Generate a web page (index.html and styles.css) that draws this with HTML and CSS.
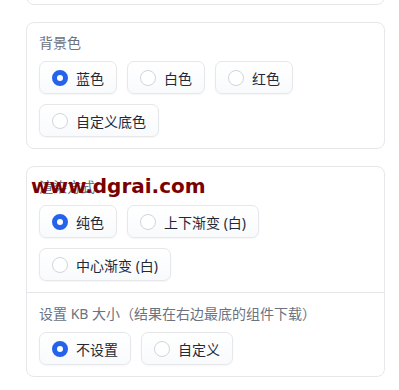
FILE: index.html
```html
<!DOCTYPE html>
<html lang="zh-CN">
<head>
    <meta charset="UTF-8">
    <meta name="viewport" content="width=device-width, initial-scale=1.0">
    <title>设置</title>
    <link rel="stylesheet" href="styles.css">
</head>
<body>

<div class="panel">
    <div class="card card-top"></div>

    <div class="card">
        <div class="section">
            <div class="label">背景色</div>
            <div class="options">
                <label class="option checked"><span class="radio"></span>蓝色</label>
                <label class="option"><span class="radio"></span>白色</label>
                <label class="option"><span class="radio"></span>红色</label>
                <label class="option"><span class="radio"></span>自定义底色</label>
            </div>
        </div>
    </div>

    <div class="card">
        <div class="section">
            <div class="label">渲染方式</div>
            <div class="options">
                <label class="option checked"><span class="radio"></span>纯色</label>
                <label class="option"><span class="radio"></span>上下渐变 (白)</label>
                <label class="option"><span class="radio"></span>中心渐变 (白)</label>
            </div>
        </div>
        <div class="section divided">
            <div class="label">设置 KB 大小（结果在右边最底的组件下载）</div>
            <div class="options">
                <label class="option checked"><span class="radio"></span>不设置</label>
                <label class="option"><span class="radio"></span>自定义</label>
            </div>
        </div>
    </div>

    <div class="watermark">www.dgrai.com</div>
</div>

</body>
</html>
```

FILE: styles.css
```css
body {
    margin: 0;
    background-color: #ffffff;
    font-family: "Noto Sans", "Noto Sans CJK SC", sans-serif;
    color: #1f2937;
}
.panel {
    position: relative;
    display: flex;
    flex-direction: column;
    gap: 17px;
    width: 359px;
    margin-left: 26px;
}
.card {
    border: 1px solid #e5e7eb;
    border-radius: 8px;
    background: #ffffff;
}
.card-top {
    height: 30px;
    margin-top: -27px;
}
.section {
    padding: 10px 12px 11px;
}
.divided {
    border-top: 1px solid #e5e7eb;
    padding-top: 11px;
}
.label {
    font-size: 14px;
    line-height: 20px;
    color: #6b7280;
    margin-bottom: 8px;
}
.options {
    display: flex;
    flex-wrap: wrap;
    gap: 10px;
}
.option {
    display: flex;
    align-items: center;
    gap: 8px;
    height: 33px;
    box-sizing: border-box;
    padding: 0 12px;
    font-size: 14px;
    color: #1f2937;
    border: 1px solid #e5e7eb;
    border-radius: 7px;
    background: linear-gradient(#ffffff, #f8fafc);
    box-shadow: 0 1px 2px rgba(0, 0, 0, 0.04);
    cursor: pointer;
}
.radio {
    width: 16px;
    height: 16px;
    box-sizing: border-box;
    border: 1px solid #d1d5db;
    border-radius: 50%;
    background: #ffffff;
}
.checked .radio {
    border: 5px solid #2563eb;
}
.watermark {
    position: absolute;
    left: 5px;
    top: 174px;
    font-family: "DejaVu Sans", sans-serif;
    font-weight: bold;
    font-size: 20px;
    color: #7a0000;
    pointer-events: none;
}
```
